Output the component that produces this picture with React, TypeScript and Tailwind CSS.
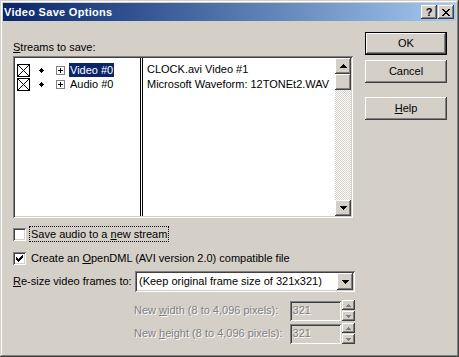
import React from "react";

const raised =
  "shadow-[inset_-1px_-1px_#404040,inset_1px_1px_#ffffff,inset_-2px_-2px_#808080,inset_2px_2px_#d4d0c8]";
const sunken =
  "shadow-[inset_1px_1px_#808080,inset_-1px_-1px_#ffffff,inset_2px_2px_#404040,inset_-2px_-2px_#d4d0c8]";

function Arrow({ down, color = "#000" }: { down?: boolean; color?: string }) {
  return (
    <svg width="7" height="4" viewBox="0 0 7 4" shapeRendering="crispEdges">
      {down ? (
        <>
          <rect x="0" y="0" width="7" height="1" fill={color} />
          <rect x="1" y="1" width="5" height="1" fill={color} />
          <rect x="2" y="2" width="3" height="1" fill={color} />
          <rect x="3" y="3" width="1" height="1" fill={color} />
        </>
      ) : (
        <>
          <rect x="3" y="0" width="1" height="1" fill={color} />
          <rect x="2" y="1" width="3" height="1" fill={color} />
          <rect x="1" y="2" width="5" height="1" fill={color} />
          <rect x="0" y="3" width="7" height="1" fill={color} />
        </>
      )}
    </svg>
  );
}

function XBox() {
  return (
    <svg width="13" height="13" viewBox="0 0 13 13" shapeRendering="crispEdges">
      <rect x="0.5" y="0.5" width="12" height="12" fill="#fff" stroke="#000" />
      <line x1="1" y1="1" x2="12" y2="12" stroke="#000" />
      <line x1="12" y1="1" x2="1" y2="12" stroke="#000" />
    </svg>
  );
}

function Diamond() {
  return (
    <svg width="5" height="5" viewBox="0 0 5 5" shapeRendering="crispEdges">
      <rect x="2" y="0" width="1" height="1" fill="#000" />
      <rect x="1" y="1" width="3" height="1" fill="#000" />
      <rect x="0" y="2" width="5" height="1" fill="#000" />
      <rect x="1" y="3" width="3" height="1" fill="#000" />
      <rect x="2" y="4" width="1" height="1" fill="#000" />
    </svg>
  );
}

function PlusBox() {
  return (
    <svg width="9" height="9" viewBox="0 0 9 9" shapeRendering="crispEdges">
      <rect x="0.5" y="0.5" width="8" height="8" fill="#fff" stroke="#808080" />
      <rect x="2" y="4" width="5" height="1" fill="#000" />
      <rect x="4" y="2" width="1" height="5" fill="#000" />
    </svg>
  );
}

function Check() {
  const cols = [2, 3, 4, 3, 2, 1, 0];
  return (
    <svg width="13" height="13" viewBox="0 0 13 13" shapeRendering="crispEdges">
      {cols.map((y, i) => (
        <rect key={i} x={3 + i} y={3 + y} width="1" height="3" fill="#000" />
      ))}
    </svg>
  );
}

function CheckBox({ checked }: { checked?: boolean }) {
  return (
    <div className={`w-[13px] h-[13px] bg-white shrink-0 ${sunken}`}>
      {checked ? <Check /> : null}
    </div>
  );
}

function Spin() {
  return (
    <div className="flex flex-col w-[13px] h-[21px] ml-[1px]">
      <div className={`h-[10px] bg-[#d4d0c8] flex items-center justify-center ${raised}`}>
        <svg width="5" height="3" viewBox="0 0 5 3" shapeRendering="crispEdges">
          <rect x="2" y="0" width="1" height="1" fill="#808080" />
          <rect x="1" y="1" width="3" height="1" fill="#808080" />
          <rect x="0" y="2" width="5" height="1" fill="#808080" />
        </svg>
      </div>
      <div className="h-[1px]" />
      <div className={`h-[10px] bg-[#d4d0c8] flex items-center justify-center ${raised}`}>
        <svg width="5" height="3" viewBox="0 0 5 3" shapeRendering="crispEdges">
          <rect x="0" y="0" width="5" height="1" fill="#808080" />
          <rect x="1" y="1" width="3" height="1" fill="#808080" />
          <rect x="2" y="2" width="1" height="1" fill="#808080" />
        </svg>
      </div>
    </div>
  );
}

const disabledText = "text-[#808080] [text-shadow:1px_1px_0_#ffffff]";

export default function App() {
  return (
    <div className="w-[459px] h-[357px] bg-[#d4d0c8] p-[3px] flex flex-col font-['Liberation_Sans',Arial,sans-serif] text-[11px] text-black leading-[13px] shadow-[inset_-1px_-1px_#404040,inset_1px_1px_#d4d0c8,inset_-2px_-2px_#808080,inset_2px_2px_#ffffff] select-none">
      {/* Title bar */}
      <div className="h-[18px] bg-linear-to-r from-[#0a246a] to-[#a6caf0] flex items-center pl-[1px] pr-[2px] shrink-0">
        <span className="text-white font-bold text-[11px] tracking-[0.3px] flex-1">Video Save Options</span>
        <div className={`w-[16px] h-[14px] bg-[#d4d0c8] flex items-center justify-center font-bold text-[11px] ${raised}`}>
          ?
        </div>
        <div className={`w-[16px] h-[14px] bg-[#d4d0c8] ml-[1px] flex items-center justify-center ${raised}`}>
          <svg width="8" height="7" viewBox="0 0 8 7" shapeRendering="crispEdges">
            {[0, 1, 2, 3, 4, 5, 6].map((i) => (
              <React.Fragment key={i}>
                <rect x={i} y={i} width="2" height="1" fill="#000" />
                <rect x={6 - i} y={i} width="2" height="1" fill="#000" />
              </React.Fragment>
            ))}
          </svg>
        </div>
      </div>

      {/* Client */}
      <div className="flex-1 flex pl-[10px]">
        {/* Left column */}
        <div className="w-[342px] flex flex-col pt-[20px]">
          <div className="h-[13px]">
            <span className="underline">S</span>treams to save:
          </div>
          <div className={`mt-[2px] w-[340px] h-[162px] bg-white p-[2px] flex ${sunken}`}>
            <div className="w-[125px] flex flex-col pt-[5px]">
              <div className="h-[14px] flex items-center">
                <div className="ml-[2px]"><XBox /></div>
                <div className="ml-[9px]"><Diamond /></div>
                <div className="ml-[12px]"><PlusBox /></div>
                <div className="ml-[4px] h-[14px] px-[1px] bg-[#0a246a] text-white flex items-center">Video #0</div>
              </div>
              <div className="h-[14px] flex items-center">
                <div className="ml-[2px]"><XBox /></div>
                <div className="ml-[9px]"><Diamond /></div>
                <div className="ml-[12px]"><PlusBox /></div>
                <div className="ml-[4px] px-[1px]">Audio #0</div>
              </div>
            </div>
            <div className="w-[3px] border-x border-[#000] bg-white" />
            <div className="flex-1 flex flex-col pl-[4px] pt-[4px]">
              <div className="h-[15px] flex items-center">CLOCK.avi Video #1</div>
              <div className="h-[15px] flex items-center">Microsoft Waveform: 12TONEt2.WAV</div>
            </div>
            <div className="w-[16px] flex flex-col">
              <div className={`h-[16px] bg-[#d4d0c8] flex items-center justify-center ${raised}`}>
                <Arrow />
              </div>
              <div className={`h-[16px] bg-[#d4d0c8] ${raised}`} />
              <div className="flex-1 [background-image:repeating-conic-gradient(#d4d0c8_0%_25%,#ffffff_0%_50%)] [background-size:2px_2px]" />
              <div className={`h-[16px] bg-[#d4d0c8] flex items-center justify-center ${raised}`}>
                <Arrow down />
              </div>
            </div>
          </div>

          <div className="mt-[8px] h-[16px] flex items-center">
            <CheckBox />
            <div className="ml-[3px] h-[16px] px-[1px] border border-dotted border-black flex items-center">
              <span>
                Save audio to a <span className="underline">n</span>ew stream
              </span>
            </div>
          </div>
          <div className="mt-[8px] h-[16px] flex items-center">
            <CheckBox checked />
            <div className="ml-[3px] px-[2px]">
              Create an <span className="underline">O</span>penDML (AVI version 2.0) compatible file
            </div>
          </div>

          <div className="mt-[5px] h-[21px] flex items-center">
            <div className="w-[122px]">
              <span className="underline">R</span>e-size video frames to:
            </div>
            <div className={`w-[220px] h-[21px] bg-white p-[2px] flex items-center ${sunken}`}>
              <div className="flex-1 pl-[2px]">(Keep original frame size of 321x321)</div>
              <div className={`w-[16px] h-[17px] bg-[#d4d0c8] flex items-center justify-center ${raised}`}>
                <Arrow down />
              </div>
            </div>
          </div>

          <div className="mt-[8px] h-[21px] flex items-center">
            <div className={`ml-[121px] w-[157px] ${disabledText}`}>
              New <span className="underline">w</span>idth (8 to 4,096 pixels):
            </div>
            <div className={`w-[52px] h-[20px] bg-[#d4d0c8] pl-[3px] flex items-center ${sunken} ${disabledText}`}>321</div>
            <Spin />
          </div>
          <div className="mt-[2px] h-[21px] flex items-center">
            <div className={`ml-[121px] w-[157px] ${disabledText}`}>
              New <span className="underline">h</span>eight (8 to 4,096 pixels):
            </div>
            <div className={`w-[52px] h-[20px] bg-[#d4d0c8] pl-[3px] flex items-center ${sunken} ${disabledText}`}>321</div>
            <Spin />
          </div>
        </div>

        {/* Right column */}
        <div className="ml-[10px] w-[82px] flex flex-col pt-[11px]">
          <div className="h-[23px] bg-[#d4d0c8] flex items-center justify-center shadow-[inset_0_0_0_1px_#000000,inset_-2px_-2px_#404040,inset_2px_2px_#ffffff,inset_-3px_-3px_#808080,inset_3px_3px_#d4d0c8]">
            OK
          </div>
          <div className={`mt-[5px] h-[23px] bg-[#d4d0c8] flex items-center justify-center ${raised}`}>Cancel</div>
          <div className={`mt-[14px] h-[23px] bg-[#d4d0c8] flex items-center justify-center ${raised}`}>
            <span><span className="underline">H</span>elp</span>
          </div>
        </div>
      </div>
    </div>
  );
}
